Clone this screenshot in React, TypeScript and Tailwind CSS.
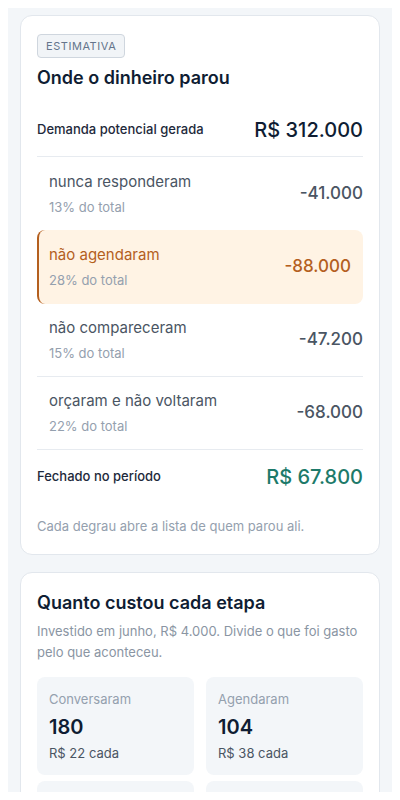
const etapas = [
  { label: "nunca responderam", pct: "13% do total", value: "-41.000" },
  { label: "não agendaram", pct: "28% do total", value: "-88.000", hot: true },
  { label: "não compareceram", pct: "15% do total", value: "-47.200" },
  { label: "orçaram e não voltaram", pct: "22% do total", value: "-68.000" },
]

const custos = [
  { label: "Conversaram", qtd: "180", cada: "R$ 22 cada" },
  { label: "Agendaram", qtd: "104", cada: "R$ 38 cada" },
  { label: "Compareceram", qtd: "72", cada: "R$ 56 cada" },
  { label: "Fecharam", qtd: "31", cada: "R$ 129 cada" },
]

const EtapaRow = ({ label, pct, value, hot, last }: { label: string; pct: string; value: string; hot?: boolean; last?: boolean }) => {
  if (hot) {
    return (
      <div className="flex items-center justify-between rounded-lg border-l-2 border-[#b45f1e] bg-[#fff3e4] py-[14px] pl-[10px] pr-3">
        <div>
          <p className="text-[15px] leading-[22px] text-[#b45f1e]">{label}</p>
          <p className="mt-1 text-[13px] leading-5 text-[#94a0ae]">{pct}</p>
        </div>
        <span className="text-[17px] font-medium text-[#b45f1e]">{value}</span>
      </div>
    )
  }
  return (
    <div className={`flex items-center justify-between py-[13px] pl-3 ${last ? "border-b border-[#e7ebf0]" : ""}`}>
      <div>
        <p className="text-[15px] leading-[22px] text-[#4a5563]">{label}</p>
        <p className="mt-1 text-[13px] leading-5 text-[#94a0ae]">{pct}</p>
      </div>
      <span className="text-[17px] font-medium text-[#4a5563]">{value}</span>
    </div>
  )
}

export default function App() {
  return (
    <div className="bg-white p-2 font-['Inter',sans-serif]">
      <div className="h-[784px] overflow-hidden bg-[#f3f6f9] px-3 pt-[7px]">
        <section className="rounded-xl border border-[#e2e7ed] bg-white p-4 pb-[18px]">
          <span className="inline-block rounded border border-[#cfd6de] bg-[#f1f4f7] px-2 py-[3px] text-[11px] leading-4 tracking-wider text-[#64748b]">
            ESTIMATIVA
          </span>
          <h2 className="mt-[6px] text-lg font-semibold leading-7 text-[#0f1d33]">Onde o dinheiro parou</h2>

          <div className="mt-3 flex items-center justify-between border-b border-[#e7ebf0] py-3">
            <span className="text-[13px] font-medium text-[#1e293b]">Demanda potencial gerada</span>
            <span className="text-xl font-medium leading-7 text-[#0f1d33]">R$ 312.000</span>
          </div>

          <div className="pt-px">
            {etapas.map((e, i) => (
              <EtapaRow key={e.label} {...e} last={i >= 2} />
            ))}
          </div>

          <div className="flex items-center justify-between py-[13px]">
            <span className="text-[13px] font-medium text-[#1e293b]">Fechado no período</span>
            <span className="text-xl font-medium leading-7 text-[#1d7a6a]">R$ 67.800</span>
          </div>

          <p className="mt-3 text-[13px] leading-5 text-[#94a0ae]">Cada degrau abre a lista de quem parou ali.</p>
        </section>

        <section className="mt-[17px] rounded-xl border border-[#e2e7ed] bg-white p-4">
          <h2 className="text-lg font-semibold leading-7 text-[#0f1d33]">Quanto custou cada etapa</h2>
          <p className="mt-1 text-[13px] leading-[21px] text-[#8a95a3]">
            Investido em junho, R$ 4.000. Divide o que foi gasto pelo que aconteceu.
          </p>
          <div className="mt-[14px] grid grid-cols-2 gap-x-3 gap-y-1.5">
            {custos.map((c) => (
              <div key={c.label} className="rounded-lg bg-[#f3f6f9] p-3">
                <p className="text-[13px] leading-5 text-[#94a0ae]">{c.label}</p>
                <p className="mt-1 text-xl font-semibold leading-7 text-[#0f1d33]">{c.qtd}</p>
                <p className="mt-0.5 text-[13px] leading-5 text-[#4a5563]">{c.cada}</p>
              </div>
            ))}
          </div>
        </section>
      </div>
    </div>
  )
}
